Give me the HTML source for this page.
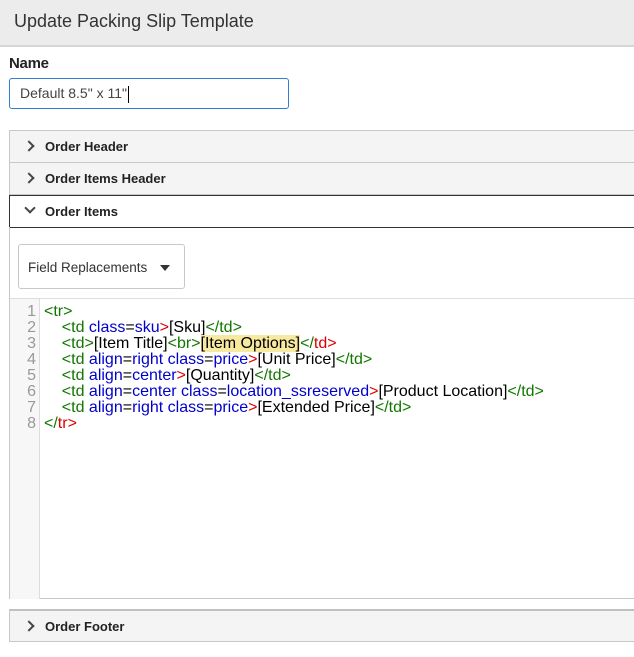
<!DOCTYPE html>
<html><head><style>
body{margin:0;width:634px;height:657px;overflow:hidden;background:#fff;font-family:"Liberation Sans",sans-serif;color:#333;position:relative}
.hdr{position:absolute;left:0;top:0;width:634px;height:45px;background:#ececec;border-bottom:2px solid #d6d6d6}
.hdr span{position:absolute;left:14px;top:11px;font-size:18px;color:#333}
.lbl{position:absolute;left:9px;top:55px;font-size:15px;color:#222;font-weight:bold;letter-spacing:-0.3px}
.inp{position:absolute;left:9px;top:78px;border:1px solid #2e7fd0;border-radius:3px;font-size:14px;line-height:29px;color:#444;box-sizing:border-box;padding-left:10px;width:280px;height:31px}
.inp b{display:inline-block;width:1px;height:17px;background:#000;vertical-align:middle;margin-left:1px}
.p{position:absolute;left:9px;width:625px;height:33px;background:#f4f4f4;border:1px solid #c8c8c8;border-right:none;box-sizing:border-box;font-size:13px;font-weight:bold;color:#222}
.p span{position:absolute;left:35px;top:8px}
.p i{position:absolute;left:15px;top:11px;width:6px;height:6px;border-right:2px solid #444;border-top:2px solid #444;transform:rotate(45deg)}
.p.open{background:#fff;border:1px solid #333;border-right:none}
.p.open i{transform:rotate(135deg);top:8px;left:16px}
.box{position:absolute;left:9px;top:227px;width:625px;height:372px;border:1px solid #c8c8c8;border-right:none;border-top:none;box-sizing:border-box}
.btn{position:absolute;left:18px;top:244px;width:167px;height:45px;border:1px solid #c8c8c8;border-radius:3px;box-sizing:border-box;font-size:13.5px;color:#333}
.btn span{position:absolute;left:9px;top:15px}
.btn b{position:absolute;left:141px;top:20px;border-left:5px solid transparent;border-right:5px solid transparent;border-top:6px solid #333}
.ed{position:absolute;left:10px;top:298px;width:624px;height:300px;border-top:1px solid #ddd}
.gut{position:absolute;left:0;top:0;width:29px;height:300px;background:#f7f7f7;border-right:1px solid #ddd}
.ln{position:absolute;left:0;width:26px;text-align:right;color:#999;font-size:16px}
.code{position:absolute;left:34px;top:5px;font-size:16px;line-height:16px;white-space:pre;color:#000}
.g{color:#170}.b{color:#00c}.r{color:#d00}.hl{background:#f8e9a0}
</style></head><body>
<div class="hdr"><span>Update Packing Slip Template</span></div>
<div class="lbl">Name</div>
<div class="inp">Default 8.5" x 11"<b></b></div>
<div class="p" style="top:130px"><i></i><span>Order Header</span></div>
<div class="p" style="top:162px"><i></i><span>Order Items Header</span></div>
<div class="p open" style="top:195px"><i></i><span>Order Items</span></div>
<div class="box"></div>
<div class="btn"><span>Field Replacements</span><b></b></div>
<div class="ed"><div class="gut">
<div class="ln" style="top:5px;line-height:16px">1<br>2<br>3<br>4<br>5<br>6<br>7<br>8</div></div>
<div class="code"><span class="g">&lt;tr&gt;</span>
    <span class="g">&lt;td</span> <span class="b">class</span>=<span class="b">sku</span><span class="r">&gt;</span>[Sku]<span class="g">&lt;/td&gt;</span>
    <span class="g">&lt;td&gt;</span>[Item Title]<span class="g">&lt;br&gt;</span><span class="hl">[Item Options]</span><span class="g">&lt;/</span><span class="r">td&gt;</span>
    <span class="g">&lt;td</span> <span class="b">align</span>=<span class="b">right</span> <span class="b">class</span>=<span class="b">price</span><span class="r">&gt;</span>[Unit Price]<span class="g">&lt;/td&gt;</span>
    <span class="g">&lt;td</span> <span class="b">align</span>=<span class="b">center</span><span class="r">&gt;</span>[Quantity]<span class="g">&lt;/td&gt;</span>
    <span class="g">&lt;td</span> <span class="b">align</span>=<span class="b">center</span> <span class="b">class</span>=<span class="b">location_ssreserved</span><span class="r">&gt;</span>[Product Location]<span class="g">&lt;/td&gt;</span>
    <span class="g">&lt;td</span> <span class="b">align</span>=<span class="b">right</span> <span class="b">class</span>=<span class="b">price</span><span class="r">&gt;</span>[Extended Price]<span class="g">&lt;/td&gt;</span>
<span class="g">&lt;/</span><span class="r">tr&gt;</span></div></div>
<div class="p" style="top:609px;border-top:2px solid #c0c0c0"><i></i><span>Order Footer</span></div>
</body></html>
